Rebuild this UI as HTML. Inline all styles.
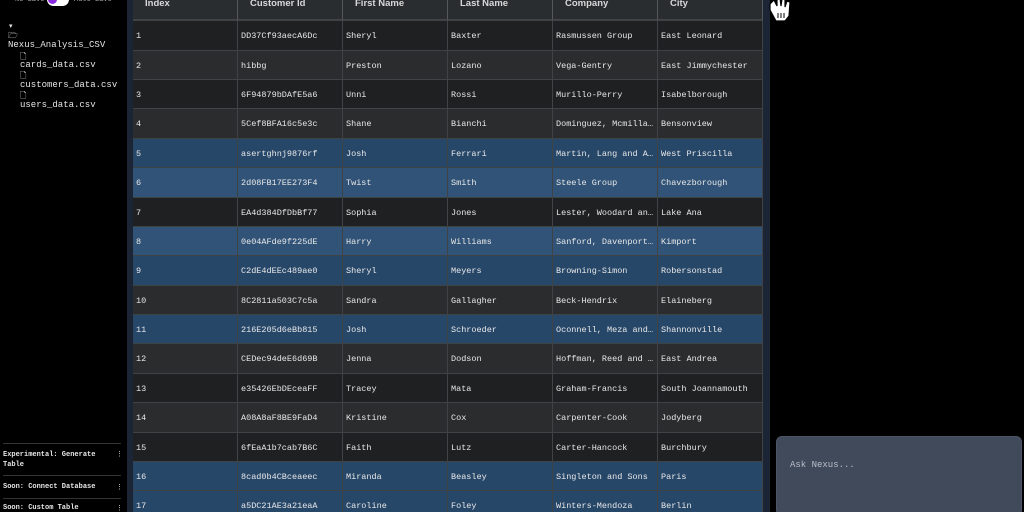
<!DOCTYPE html>
<html><head><style>
*{margin:0;padding:0;box-sizing:border-box}
html,body{width:1024px;height:512px;overflow:hidden}
body{background:#000;position:relative;font-family:"Liberation Mono",monospace;color:#e6e6e6}
.side{position:absolute;left:0;top:0;width:127px;height:512px;background:#000;font-size:9px}
.gap{position:absolute;left:127px;top:0;width:6px;height:512px;background:#1b2536}
.gap2{position:absolute;left:763px;top:0;width:7px;height:512px;background:#1b2536}
.tbl{position:absolute;left:133px;top:0;width:630px;height:512px;overflow:hidden;background:#3f4345}
.r{position:absolute;left:0;width:630px;height:29.4px;display:flex}
.c{width:105px;height:100%;border-right:1px solid #3f4345;border-bottom:1px solid #3f4345;font-size:8.5px;line-height:31px;padding-left:3px;white-space:nowrap;overflow:hidden;color:#e8e8e8}
.h .c{background:#2a2d2f;font-family:"Liberation Sans",sans-serif;font-size:9.5px;font-weight:bold;color:#d8d8d8;padding-left:12px;line-height:10px;border-right:1px solid #55595b;border-bottom:2px solid #3f4345}
.d .c{background:#1e2022}
.g .c{background:#2a2c2e}
.b .c{background:#274769}
.l .c{background:#305377}
.ask{position:absolute;left:776px;top:436px;width:246px;height:80px;background:#414a5a;border-radius:6px;border:1px solid #4d5667;font-size:9px;color:#b9bfca;padding:23px 0 0 13px}
</style></head><body>
<div class="side">
<div style="position:absolute;left:15px;top:-4px;font-size:7px;color:#aaa">No Save</div>
<div style="position:absolute;left:47px;top:-7px;width:22px;height:13px;border-radius:7px;background:#fff"><div style="position:absolute;left:1px;top:2px;width:9px;height:9px;border-radius:5px;background:#8a2be2"></div></div>
<div style="position:absolute;left:74px;top:-4px;font-size:7px;color:#aaa">Auto Save</div>
<div style="position:absolute;left:9px;top:22px;font-size:7px">▾</div>
<div style="position:absolute;left:8px;top:30px;font-size:8px">🗁</div>
<div style="position:absolute;left:8px;top:40px">Nexus_Analysis_CSV</div>
<div style="position:absolute;left:20px;top:51px;font-size:8px">🗋</div>
<div style="position:absolute;left:20px;top:60px">cards_data.csv</div>
<div style="position:absolute;left:20px;top:70px;font-size:8px">🗋</div>
<div style="position:absolute;left:20px;top:80px">customers_data.csv</div>
<div style="position:absolute;left:20px;top:90px;font-size:8px">🗋</div>
<div style="position:absolute;left:20px;top:100px">users_data.csv</div>
<div style="position:absolute;left:3px;top:443px;width:118px;border-top:1px solid #333"></div>
<div style="position:absolute;left:3px;top:450px;font-size:7px;font-weight:bold;line-height:10px">Experimental: Generate<br>Table</div>
<div style="position:absolute;left:116px;top:450px;font-size:7px">⋮</div>
<div style="position:absolute;left:3px;top:475px;width:118px;border-top:1px solid #333"></div>
<div style="position:absolute;left:3px;top:483px;font-size:7px;font-weight:bold">Soon: Connect Database</div>
<div style="position:absolute;left:116px;top:483px;font-size:7px">⋮</div>
<div style="position:absolute;left:3px;top:498px;width:118px;border-top:1px solid #333"></div>
<div style="position:absolute;left:3px;top:504px;font-size:7px;font-weight:bold">Soon: Custom Table</div>
<div style="position:absolute;left:116px;top:504px;font-size:7px">⋮</div>
</div>
<div class="gap"></div><div class="gap2"></div>
<div class="tbl">
<div class="r h" style="top:-1px;height:22px"><div class="c">Index</div><div class="c">Customer Id</div><div class="c">First Name</div><div class="c">Last Name</div><div class="c">Company</div><div class="c">City</div></div>
<div class="r d" style="top:21.3px"><div class="c">1</div><div class="c">DD37Cf93aecA6Dc</div><div class="c">Sheryl</div><div class="c">Baxter</div><div class="c">Rasmussen Group</div><div class="c">East Leonard</div></div>
<div class="r g" style="top:50.7px"><div class="c">2</div><div class="c">hibbg</div><div class="c">Preston</div><div class="c">Lozano</div><div class="c">Vega-Gentry</div><div class="c">East Jimmychester</div></div>
<div class="r d" style="top:80.1px"><div class="c">3</div><div class="c">6F94879bDAfE5a6</div><div class="c">Unni</div><div class="c">Rossi</div><div class="c">Murillo-Perry</div><div class="c">Isabelborough</div></div>
<div class="r g" style="top:109.4px"><div class="c">4</div><div class="c">5Cef8BFA16c5e3c</div><div class="c">Shane</div><div class="c">Bianchi</div><div class="c">Dominguez, Mcmilla…</div><div class="c">Bensonview</div></div>
<div class="r b" style="top:138.8px"><div class="c">5</div><div class="c">asertghnj9876rf</div><div class="c">Josh</div><div class="c">Ferrari</div><div class="c">Martin, Lang and A…</div><div class="c">West Priscilla</div></div>
<div class="r l" style="top:168.2px"><div class="c">6</div><div class="c">2d08FB17EE273F4</div><div class="c">Twist</div><div class="c">Smith</div><div class="c">Steele Group</div><div class="c">Chavezborough</div></div>
<div class="r d" style="top:197.6px"><div class="c">7</div><div class="c">EA4d384DfDbBf77</div><div class="c">Sophia</div><div class="c">Jones</div><div class="c">Lester, Woodard an…</div><div class="c">Lake Ana</div></div>
<div class="r l" style="top:226.9px"><div class="c">8</div><div class="c">0e04AFde9f225dE</div><div class="c">Harry</div><div class="c">Williams</div><div class="c">Sanford, Davenport…</div><div class="c">Kimport</div></div>
<div class="r b" style="top:256.3px"><div class="c">9</div><div class="c">C2dE4dEEc489ae0</div><div class="c">Sheryl</div><div class="c">Meyers</div><div class="c">Browning-Simon</div><div class="c">Robersonstad</div></div>
<div class="r g" style="top:285.7px"><div class="c">10</div><div class="c">8C2811a503C7c5a</div><div class="c">Sandra</div><div class="c">Gallagher</div><div class="c">Beck-Hendrix</div><div class="c">Elaineberg</div></div>
<div class="r b" style="top:315.1px"><div class="c">11</div><div class="c">216E205d6eBb815</div><div class="c">Josh</div><div class="c">Schroeder</div><div class="c">Oconnell, Meza and…</div><div class="c">Shannonville</div></div>
<div class="r g" style="top:344.4px"><div class="c">12</div><div class="c">CEDec94deE6d69B</div><div class="c">Jenna</div><div class="c">Dodson</div><div class="c">Hoffman, Reed and …</div><div class="c">East Andrea</div></div>
<div class="r d" style="top:373.8px"><div class="c">13</div><div class="c">e35426EbDEceaFF</div><div class="c">Tracey</div><div class="c">Mata</div><div class="c">Graham-Francis</div><div class="c">South Joannamouth</div></div>
<div class="r g" style="top:403.2px"><div class="c">14</div><div class="c">A08A8aF8BE9FaD4</div><div class="c">Kristine</div><div class="c">Cox</div><div class="c">Carpenter-Cook</div><div class="c">Jodyberg</div></div>
<div class="r d" style="top:432.6px"><div class="c">15</div><div class="c">6fEaA1b7cab7B6C</div><div class="c">Faith</div><div class="c">Lutz</div><div class="c">Carter-Hancock</div><div class="c">Burchbury</div></div>
<div class="r b" style="top:461.9px"><div class="c">16</div><div class="c">8cad0b4CBceaeec</div><div class="c">Miranda</div><div class="c">Beasley</div><div class="c">Singleton and Sons</div><div class="c">Paris</div></div>
<div class="r b" style="top:491.3px"><div class="c">17</div><div class="c">a5DC21AE3a21eaA</div><div class="c">Caroline</div><div class="c">Foley</div><div class="c">Winters-Mendoza</div><div class="c">Berlin</div></div>
</div>
<svg style="position:absolute;left:764px;top:-4px" width="32" height="30" viewBox="0 0 32 30"><path d="M6 8 L10 4 L13 10 L13 2 L16 2 L17 10 L18 3 L21 3 L21 11 L23 5 L26 6 L25 20 L21 25 L12 25 L6 14 Z" fill="#fff" stroke="#000" stroke-width="1.2"/><path d="M14 17v5M17 17v5M20 17v5" stroke="#000"/></svg>
<div class="ask">Ask Nexus...</div>
</body></html>
